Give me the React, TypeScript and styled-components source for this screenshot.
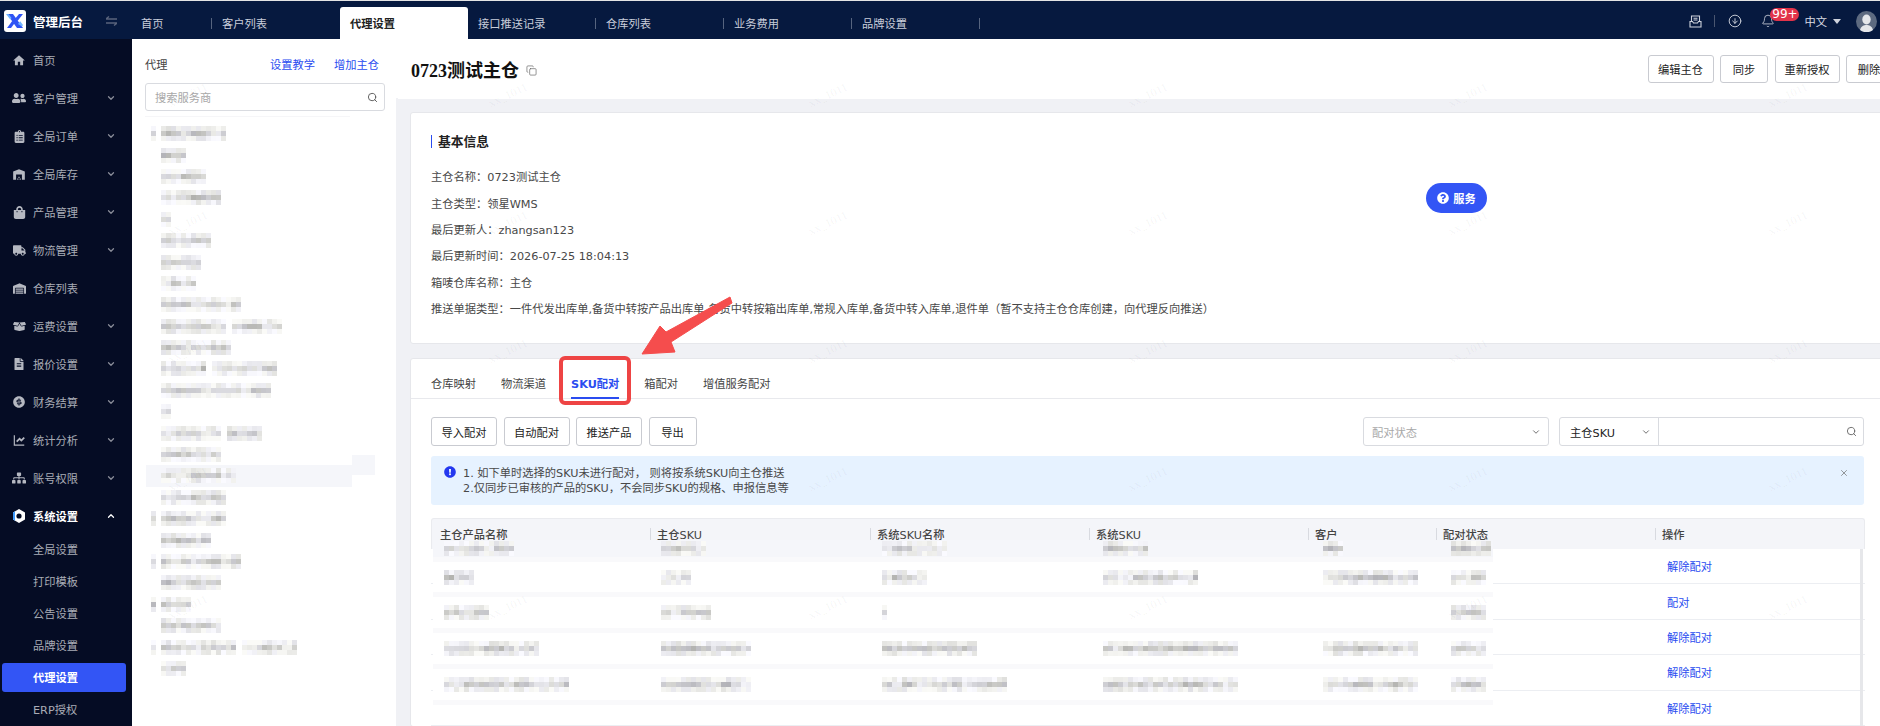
import React from "react";
import styled, { createGlobalStyle } from "styled-components";
import { Bell, ChevronDown, ChevronUp, CircleArrowDown, Copy, Search, X } from "lucide-react";
import {
  FaBoxOpen, FaClipboardList, FaExclamationCircle, FaFileAlt, FaQuestionCircle, FaShoppingBag,
  FaSitemap, FaTruck, FaUserFriends, FaWarehouse,
} from "react-icons/fa";
import { MdHome, MdWarehouse } from "react-icons/md";
import { RiLineChartFill, RiMoneyDollarCircleFill } from "react-icons/ri";

const Global = createGlobalStyle`
  html, body { margin: 0; padding: 0; width: 1880px; height: 726px; overflow: hidden; background: #fff; }
  body { font-family: "DejaVu Sans", "Noto Sans CJK SC", sans-serif; font-size: 11.25px; color: #444; }
  * { box-sizing: border-box; }
`;

const Page = styled.div`
  position: relative; width: 1880px; height: 726px; overflow: hidden;
  border-top: 1px solid #e4e4e4; display: flex; flex-direction: column;
`;
const TopBar = styled.header`
  height: 38px; flex: none; background: #06193f; display: flex; align-items: stretch;
`;
const Brand = styled.div`
  width: 132px; flex: none; display: flex; align-items: center; padding-left: 4px; padding-top: 2px;
`;
const LogoBox = styled.div`
  width: 22px; height: 22px; background: #fff; border-radius: 3px; display: flex; align-items: center; justify-content: center;
`;
const BrandName = styled.span`
  margin-left: 7px; font-size: 12.5px; font-weight: 700; color: #fff; white-space: nowrap;
`;
const SwitchIcon = styled.svg`
  margin-left: 23px; flex: none;
`;
const Tabs = styled.nav`
  display: flex; align-items: flex-end; height: 100%;
`;
const TopTab = styled.div<{ $w: number; $active?: boolean; $pad?: number }>`
  width: ${(p) => p.$w}px; height: ${(p) => (p.$active ? 32 : 38)}px; display: flex; align-items: center;
  justify-content: space-between; padding-left: ${(p) => p.$pad ?? 10}px; padding-top: ${(p) => (p.$active ? 0 : 6)}px;
  color: ${(p) => (p.$active ? "#222" : "#c9cedb")}; font-weight: ${(p) => (p.$active ? 600 : 400)};
  background: ${(p) => (p.$active ? "#fff" : "transparent")}; border-radius: 3px 3px 0 0;
`;
const TopSep = styled.i`
  width: 1px; height: 11px; background: #56647f; display: block;
`;
const TopRight = styled.div`
  margin-left: auto; display: flex; align-items: center; color: #cfd3dd; position: relative; padding-top: 2px;
`;
const TopIconSep = styled.i`
  width: 1px; height: 12px; background: #4a5670; margin: 0 13px 0 12px;
`;
const BellWrap = styled.span`
  position: relative; display: flex; margin-left: 19px;
`;
const Badge = styled.span`
  position: absolute; left: 9px; top: -6px; width: 29px; height: 13px; border-radius: 7px; background: #e2334a;
  color: #fff; font-size: 12px; font-weight: 400; line-height: 13px; text-align: center;
`;
const Lang = styled.span`
  margin-left: 29px; color: #d9dce4; display: flex; align-items: center; gap: 6px;
`;
const Caret = styled.i`
  width: 0; height: 0; border-left: 4px solid transparent; border-right: 4px solid transparent; border-top: 5px solid #cfd3dd;
`;
const Avatar = styled.svg`
  margin-left: 15px; margin-right: 3px; flex: none;
`;

const Body = styled.div`
  flex: 1; display: flex; min-height: 0;
`;
const Sidebar = styled.aside`
  width: 132px; flex: none; background: #050c24; padding-top: 2px; color: #a9acb6;
`;
const MenuItem = styled.div<{ $open?: boolean }>`
  height: 38px; display: flex; align-items: center; padding-left: 12px; padding-right: 16px;
  color: ${(p) => (p.$open ? "#fff" : "#a9acb6")}; font-weight: ${(p) => (p.$open ? 600 : 400)};
`;
const MenuIcon = styled.span<{ $open?: boolean }>`
  width: 14px; height: 14px; display: flex; align-items: center; justify-content: center; color: #b5b8c1; flex: none;
`;
const MenuLabel = styled.span`
  margin-left: 7px; flex: 1; white-space: nowrap;
`;
const SubMenu = styled.div`
  margin-top: -2px;
`;
const SubItem = styled.div<{ $active?: boolean }>`
  height: ${(p) => (p.$active ? 29 : 32)}px; margin: ${(p) => (p.$active ? "1.5px 6px 1.5px 2px" : "0")};
  padding-left: ${(p) => (p.$active ? 31 : 33)}px; display: flex; align-items: center; border-radius: 3px;
  background: ${(p) => (p.$active ? "#3355f5" : "transparent")}; color: ${(p) => (p.$active ? "#fff" : "#a9acb6")};
  font-weight: ${(p) => (p.$active ? 600 : 400)};
`;

const AgentPanel = styled.section`
  width: 266px; flex: none; background: #fff; padding: 17px 13px 0; position: relative;
  &::after { content: ""; position: absolute; right: 0; top: 59px; bottom: 0; width: 2px; background: #f0f1f5; }
`;
const PanelHead = styled.div`
  height: 16px; display: flex; align-items: center; padding-right: 6px;
`;
const PanelTitle = styled.span`
  flex: 1; color: #444;
`;
const LinkText = styled.a`
  color: #2a4cf0; margin-left: 19px;
`;
const SearchBox = styled.div`
  margin-top: 11px; height: 28px; width: 240px; border: 1px solid #d9dbe0; border-radius: 3px; display: flex; align-items: center;
  padding: 0 6px 0 9px; color: #a8a8a8; justify-content: space-between;
`;
const SearchRule = styled.div`
  height: 1px; width: 205px; background: #f6f6f8; margin-top: 5px;
`;
const Tree = styled.div`
  margin-top: 6px; margin-left: 1px;
`;
const TreeRow = styled.div<{ $selected?: boolean }>`
  height: 21.4px; width: 206px; display: flex; align-items: center; position: relative;
  background: ${(p) => (p.$selected ? "#f5f6fa" : "transparent")};
  &::after {
    content: ""; display: ${(p) => (p.$selected ? "block" : "none")}; position: absolute; left: 206px; top: -10px; width: 23px; height: 20px; background: #f5f6fa;
  }
`;
const TreeDot = styled.span`
  width: 15px; flex: none; padding-left: 5px; display: flex;
`;
const Segments = styled.span`
  display: flex; gap: 5px; position: relative; z-index: 1;
`;
const MosaicSvg = styled.svg`
  display: block; filter: blur(0.3px); flex: none;
`;

const Main = styled.main`
  flex: 1; min-width: 0; background: #f0f1f5; overflow: hidden;
`;
const Head = styled.div`
  width: 1494px; height: 60px; background: #fff; display: flex; align-items: center; padding-left: 13px; padding-bottom: 1px;
`;
const Title = styled.h1`
  margin: 0; font: 700 18px "Liberation Serif", "Noto Sans CJK SC", serif; color: #111; display: flex; align-items: center;
`;
const CopyIcon = styled(Copy)`
  margin-left: 7px; margin-top: 3px; color: #666;
`;
const HeadActions = styled.div`
  margin-left: auto; display: flex; gap: 6.5px;
`;
const Btn = styled.button<{ $w: number }>`
  width: ${(p) => p.$w}px; height: 28px; border: 1px solid #c9cbd1; border-radius: 3px; background: #fff; padding: 0;
  font: inherit; color: #222;
`;
const Card = styled.section<{ $mt: number; $h?: number }>`
  width: 1475px; margin: ${(p) => p.$mt}px 0 0 12px; background: #fff; border: 1px solid #e6e7eb; border-radius: 3px;
  ${(p) => (p.$h ? `height: ${p.$h}px;` : "")}
`;
const InfoBody = styled.div`
  padding: 22px 20px 0;
`;
const SectionTitle = styled.h2`
  margin: 0 0 15px; height: 13px; line-height: 13px; border-left: 1px solid #2a4cf0; padding-left: 6px;
  font-size: 12.75px; font-weight: 700; color: #222;
`;
const InfoRow = styled.div`
  height: 26.4px; display: flex; align-items: center; color: #484848; white-space: nowrap;
`;
const CardTabs = styled.div`
  height: 40px; border-bottom: 1px solid #e8e9ed; padding-left: 20px; display: flex; gap: 25px; align-items: stretch;
`;
const CardTab = styled.div<{ $active?: boolean }>`
  display: flex; align-items: center; padding-top: 9px; white-space: nowrap; position: relative;
  color: ${(p) => (p.$active ? "#2a4cf0" : "#444")}; font-weight: ${(p) => (p.$active ? 700 : 400)};
  border-bottom: 2px solid ${(p) => (p.$active ? "#2a4cf0" : "transparent")}; margin-bottom: -1px;
`;
const TabPane = styled.div`
  padding: 18px 20px 0;
`;
const Toolbar = styled.div`
  height: 29px; display: flex; align-items: stretch; gap: 6.5px;
`;
const ToolBtn = styled(Btn)`
  height: 29px;
`;
const ToolRight = styled.div`
  margin-left: auto; display: flex; gap: 10px;
`;
const Select = styled.div<{ $w: number }>`
  width: ${(p) => p.$w}px; border: 1px solid #d9dbe0; border-radius: 3px; display: flex; align-items: center; justify-content: space-between;
  padding: 0 7px 0 8px; color: #a8a8a8;
`;
const InputGroup = styled.div`
  width: 305px; border: 1px solid #d9dbe0; border-radius: 3px; display: flex; align-items: stretch;
`;
const GroupSelect = styled.div`
  width: 99px; border-right: 1px solid #d9dbe0; display: flex; align-items: center; justify-content: space-between; padding: 0 7px 0 10px; color: #222;
`;
const GroupInput = styled.div`
  flex: 1; display: flex; align-items: center; justify-content: flex-end; padding-right: 6px; color: #666;
`;
const Alert = styled.div`
  margin-top: 10px; height: 49px; background: #e6f2ff; border-radius: 3px; display: flex; padding: 10px 10px 0 13px; color: #484848; line-height: 15px;
`;
const AlertIcon = styled(FaExclamationCircle)`
  color: #2438ef; flex: none; margin-top: 0; margin-right: 7px;
`;
const AlertText = styled.div`
  flex: 1; margin-top: 0;
`;
const AlertClose = styled(X)`
  color: #666; margin-top: 2px; margin-right: 5px;
`;
const Table = styled.div`
  margin-top: 13px; width: 1434px; position: relative;
`;
const COLUMNS = "218px 220px 219px 219px 128px 219px 211px";
const THead = styled.div`
  height: 31px; display: grid; grid-template-columns: ${COLUMNS}; background: #f4f5f9; border: 1px solid #eaebef; border-bottom: 0; border-radius: 3px 3px 0 0;
  color: #444; font-weight: 500;
`;
const Th = styled.div<{ $first?: boolean }>`
  display: flex; align-items: center; padding-bottom: 1px; padding-left: ${(p) => (p.$first ? 8 : 0)}px; gap: 6px; white-space: nowrap;
  &::before { content: ""; display: ${(p) => (p.$first ? "none" : "block")}; width: 1px; height: 12px; background: #d8dae0; }
`;
const TRow = styled.div`
  height: 35.4px; display: grid; grid-template-columns: ${COLUMNS}; border-bottom: 1px solid #eceef2; background: #fff;
`;
const ActionCell = styled.a`
  grid-column: 7; color: #2a4cf0; display: flex; align-items: center; padding-left: 13px;
`;
const Scrollbar = styled.div`
  position: absolute; right: 2px; top: 31px; width: 3px; height: 180px; background: #e6e7ea;
`;
const Redaction = styled.div`
  position: absolute; left: 2px; top: 22px; width: 1060px; height: 172px; background: #fff;
`;
const RedactRow = styled.div<{ $h: number; $shade?: boolean }>`
  height: ${(p) => p.$h}px; display: grid; grid-template-columns: 217px 221px 221px 220px 128px 53px; align-items: center;
  background: ${(p) => (p.$shade ? "#f5f6fa" : "#fff")}; border-bottom: 5px solid #f9f9fb; padding-left: 11px;
`;

const WatermarkLayer = styled.div`
  position: absolute; left: 28px; top: 30px; display: grid; grid-template-columns: repeat(6, 320px); grid-auto-rows: 128px; pointer-events: none; z-index: 5;
`;
const Mark = styled.span`
  display: flex; align-items: center; justify-content: center; font: 12px "Liberation Serif", serif;
  color: rgba(40, 40, 60, 0.06); transform: rotate(-25deg);
`;
const ServiceBtn = styled.div`
  position: absolute; left: 1426px; top: 182px; width: 61px; height: 30px; border-radius: 15px; background: #3355f5; color: #fff; z-index: 6;
  display: flex; align-items: center; justify-content: center; gap: 4px; font-weight: 700;
`;
const RedBox = styled.div`
  position: absolute; left: 559px; top: 355px; width: 72px; height: 49px; border: 4px solid #ee4444; border-radius: 6px; z-index: 7;
`;
const ArrowSvg = styled.svg`
  position: absolute; left: 0; top: 0; z-index: 7; pointer-events: none;
`;

function Mosaic({ w, seed = 1, h = 15 }: { w: number; seed?: number; h?: number }) {
  const cells: React.ReactNode[] = [];
  let s = seed * 131 + w * 17 + 7;
  const rnd = () => {
    s = (s * 16807) % 2147483647;
    return (s % 10000) / 10000;
  };
  rnd();
  rnd();
  const cols = Math.max(1, Math.round(w / 5));
  let tone = 0;
  for (let c = 0; c < cols; c++) {
    if (c % 2 === 0) tone = rnd();
    for (let r = 0; r < 3; r++) {
      const jitter = rnd() * 26;
      const base = r === 1 ? 176 + tone * 44 + jitter : 222 + tone * 10 + jitter;
      const v = Math.min(250, Math.round(base));
      const tint = rnd() > 0.5 ? 5 : -3;
      cells.push(
        <rect key={`${c}-${r}`} x={c * 5} y={r * 5} width={5} height={5} fill={`rgb(${v},${v},${Math.min(255, v + tint)})`} />
      );
    }
  }
  return (
    <MosaicSvg width={w} height={h} viewBox={`0 0 ${w} 15`} aria-hidden>
      {cells}
    </MosaicSvg>
  );
}

const treeRows: { segs: number[]; dot?: boolean; selected?: boolean }[] = [
  { segs: [66], dot: true }, { segs: [26] }, { segs: [46] }, { segs: [61] }, { segs: [10] }, { segs: [51] },
  { segs: [41] }, { segs: [36] }, { segs: [81] }, { segs: [66, 51] }, { segs: [71] }, { segs: [46, 65] },
  { segs: [111] }, { segs: [10] }, { segs: [61, 35] }, { segs: [61] }, { segs: [76], selected: true }, { segs: [66] },
  { segs: [66], dot: true }, { segs: [51] }, { segs: [81], dot: true }, { segs: [61] }, { segs: [31], dot: true },
  { segs: [61] }, { segs: [76, 55], dot: true }, { segs: [26] },
];

const menu: { label: string; icon: React.ReactNode; chevron?: boolean }[] = [
  { label: "首页", icon: <MdHome size={17} /> },
  { label: "客户管理", icon: <FaUserFriends size={14} />, chevron: true },
  { label: "全局订单", icon: <FaClipboardList size={13} />, chevron: true },
  { label: "全局库存", icon: <MdWarehouse size={15} />, chevron: true },
  { label: "产品管理", icon: <FaShoppingBag size={13} />, chevron: true },
  { label: "物流管理", icon: <FaTruck size={13} />, chevron: true },
  { label: "仓库列表", icon: <FaWarehouse size={13} /> },
  { label: "运费设置", icon: <FaBoxOpen size={13} />, chevron: true },
  { label: "报价设置", icon: <FaFileAlt size={12} />, chevron: true },
  { label: "财务结算", icon: <RiMoneyDollarCircleFill size={16} />, chevron: true },
  { label: "统计分析", icon: <RiLineChartFill size={15} />, chevron: true },
  { label: "账号权限", icon: <FaSitemap size={14} />, chevron: true },
];

const redacted = [
  { h: 22, shade: true, cells: [70, 45, 66, 45, 22, 41] },
  { h: 35, cells: [30, 30, 46, 96, 95, 35] },
  { h: 36, cells: [45, 50, 5, 0, 0, 35] },
  { h: 36, cells: [95, 90, 95, 136, 95, 35] },
  { h: 36, cells: [125, 90, 125, 136, 95, 35] },
];

export default function App() {
  return (
    <Page>
      <Global />
      <TopBar>
        <Brand>
          <LogoBox>
            <svg width="20" height="20" viewBox="0 0 20 20" aria-hidden>
              <path d="M2 3h6l10 14h-6z" fill="#2f54f5" />
              <path d="M14 3h4l-5.500 7-2-2.700z" fill="#2f54f5" />
              <path d="M2 17h4l3.400-4.500-2-2.800z" fill="#2f54f5" />
              <path d="M1 3h2.500l3 4-1.200 1.600z" fill="#6fb4ff" />
              <path d="M13 13l2.200-2.800L18 14l-1 1.600z" fill="#6fb4ff" />
            </svg>
          </LogoBox>
          <BrandName>管理后台</BrandName>
          <SwitchIcon width="11" height="10" viewBox="0 0 11 10" aria-hidden fill="none" stroke="#59637c" strokeWidth="1.4">
            <path d="M0 3h11M0 3l3-2.500M0 7h11M11 7L8 9.500" />
          </SwitchIcon>
        </Brand>
        <Tabs>
          <TopTab $w={80} $pad={9}><span>首页</span><TopSep /></TopTab>
          <TopTab $w={128}><span>客户列表</span></TopTab>
          <TopTab $w={128} $active><span>代理设置</span></TopTab>
          <TopTab $w={128}><span>接口推送记录</span><TopSep /></TopTab>
          <TopTab $w={128}><span>仓库列表</span><TopSep /></TopTab>
          <TopTab $w={128}><span>业务费用</span><TopSep /></TopTab>
          <TopTab $w={128}><span>品牌设置</span><TopSep /></TopTab>
        </Tabs>
        <TopRight>
          <svg width="13" height="13" viewBox="0 0 13 13" fill="none" stroke="#cfd3dd" strokeWidth="1.1" aria-hidden>
            <path d="M2.500 6V1h8v5M1 6.500h2.500l1 1.500h4l1-1.500H12V12H1zM4.500 3.200h4M4.500 5h4" />
          </svg>
          <TopIconSep />
          <CircleArrowDown size={14} strokeWidth={1.6} />
          <BellWrap>
            <Bell size={14} strokeWidth={1.4} />
            <Badge>99+</Badge>
          </BellWrap>
          <Lang>中文<Caret /></Lang>
          <Avatar width="21" height="21" viewBox="0 0 21 21" aria-hidden>
            <circle cx="10.500" cy="10.500" r="10.500" fill="#5d6a80" />
            <ellipse cx="10.500" cy="8.500" rx="4.200" ry="5" fill="#e4e6ea" />
            <path d="M4 19c1-4 4-5 6.500-5s5.500 1 6.500 5a10.500 10.500 0 0 1-13 0z" fill="#e4e6ea" />
          </Avatar>
        </TopRight>
      </TopBar>
      <Body>
        <Sidebar>
          {menu.map((m) => (
            <MenuItem key={m.label}>
              <MenuIcon>{m.icon}</MenuIcon>
              <MenuLabel>{m.label}</MenuLabel>
              {m.chevron && <ChevronDown size={10} strokeWidth={3} color="#8a8d99" />}
            </MenuItem>
          ))}
          <MenuItem $open>
            <MenuIcon>
              <svg width="14" height="14" viewBox="0 0 14 14" aria-hidden>
                <path d="M7 0l6 3.500v7L7 14l-6-3.500v-7z" fill="#fff" />
                <path d="M1 3.500v7l2 1.200V2.300z" fill="#3d9bff" />
                <circle cx="7" cy="7" r="2.600" fill="#050c24" />
              </svg>
            </MenuIcon>
            <MenuLabel>系统设置</MenuLabel>
            <ChevronUp size={10} strokeWidth={3} color="#fff" />
          </MenuItem>
          <SubMenu>
            <SubItem>全局设置</SubItem>
            <SubItem>打印模板</SubItem>
            <SubItem>公告设置</SubItem>
            <SubItem>品牌设置</SubItem>
            <SubItem $active>代理设置</SubItem>
            <SubItem>ERP授权</SubItem>
          </SubMenu>
        </Sidebar>
        <AgentPanel>
          <PanelHead>
            <PanelTitle>代理</PanelTitle>
            <LinkText>设置教学</LinkText>
            <LinkText>增加主仓</LinkText>
          </PanelHead>
          <SearchBox>
            搜索服务商
            <Search size={11} color="#555" strokeWidth={2} />
          </SearchBox>
          <SearchRule />
          <Tree>
            {treeRows.map((row, i) => (
              <TreeRow key={i} $selected={row.selected}>
                <TreeDot>{row.dot && <Mosaic w={5} seed={i + 50} h={15} />}</TreeDot>
                <Segments>
                  {row.segs.map((w, j) => (
                    <Mosaic key={j} w={w} seed={i * 3 + j + 1} />
                  ))}
                </Segments>
              </TreeRow>
            ))}
          </Tree>
        </AgentPanel>
        <Main>
          <Head>
            <Title>
              0723测试主仓
              <CopyIcon size={11} strokeWidth={1.5} />
            </Title>
            <HeadActions>
              <Btn $w={66}>编辑主仓</Btn>
              <Btn $w={48}>同步</Btn>
              <Btn $w={65}>重新授权</Btn>
              <Btn $w={46}>删除</Btn>
            </HeadActions>
          </Head>
          <Card $mt={13} $h={232}>
            <InfoBody>
              <SectionTitle>基本信息</SectionTitle>
              <InfoRow>主仓名称：0723测试主仓</InfoRow>
              <InfoRow>主仓类型：领星WMS</InfoRow>
              <InfoRow>最后更新人：zhangsan123</InfoRow>
              <InfoRow>最后更新时间：2026-07-25 18:04:13</InfoRow>
              <InfoRow>箱唛仓库名称：主仓</InfoRow>
              <InfoRow>推送单据类型：一件代发出库单,备货中转按产品出库单,备货中转按箱出库单,常规入库单,备货中转入库单,退件单（暂不支持主仓仓库创建，向代理反向推送）</InfoRow>
            </InfoBody>
          </Card>
          <Card $mt={14}>
            <CardTabs>
              <CardTab>仓库映射</CardTab>
              <CardTab>物流渠道</CardTab>
              <CardTab $active>SKU配对</CardTab>
              <CardTab>箱配对</CardTab>
              <CardTab>增值服务配对</CardTab>
            </CardTabs>
            <TabPane>
              <Toolbar>
                <ToolBtn $w={66}>导入配对</ToolBtn>
                <ToolBtn $w={66}>自动配对</ToolBtn>
                <ToolBtn $w={66}>推送产品</ToolBtn>
                <ToolBtn $w={48}>导出</ToolBtn>
                <ToolRight>
                  <Select $w={186}>配对状态<ChevronDown size={10} strokeWidth={2} color="#555" /></Select>
                  <InputGroup>
                    <GroupSelect>主仓SKU<ChevronDown size={10} strokeWidth={2} color="#555" /></GroupSelect>
                    <GroupInput><Search size={11} strokeWidth={2} /></GroupInput>
                  </InputGroup>
                </ToolRight>
              </Toolbar>
              <Alert>
                <AlertIcon size={12} />
                <AlertText>
                  <div>1. 如下单时选择的SKU未进行配对， 则将按系统SKU向主仓推送</div>
                  <div>2.仅同步已审核的产品的SKU，不会同步SKU的规格、申报信息等</div>
                </AlertText>
                <AlertClose size={10} strokeWidth={1.6} />
              </Alert>
              <Table>
                <THead>
                  <Th $first>主仓产品名称</Th>
                  <Th>主仓SKU</Th>
                  <Th>系统SKU名称</Th>
                  <Th>系统SKU</Th>
                  <Th>客户</Th>
                  <Th>配对状态</Th>
                  <Th>操作</Th>
                </THead>
                {["解除配对", "配对", "解除配对", "解除配对", "解除配对"].map((a, i) => (
                  <TRow key={i}><ActionCell>{a}</ActionCell></TRow>
                ))}
                <Scrollbar />
                <Redaction>
                  {redacted.map((row, i) => (
                    <RedactRow key={i} $h={row.h} $shade={row.shade}>
                      {row.cells.map((w, j) => (
                        <span key={j}>{w > 0 && <Mosaic w={w} seed={i * 7 + j + 3} />}</span>
                      ))}
                    </RedactRow>
                  ))}
                </Redaction>
              </Table>
            </TabPane>
          </Card>
        </Main>
      </Body>
      <WatermarkLayer aria-hidden>
        {Array.from({ length: 30 }).map((_, i) => (
          <Mark key={i}>xx_1011</Mark>
        ))}
      </WatermarkLayer>
      <ServiceBtn><FaQuestionCircle size={12} />服务</ServiceBtn>
      <RedBox />
      <ArrowSvg width="1880" height="726" viewBox="0 0 1880 726" aria-hidden>
        <polygon points="642,353 660,325 666,331 730,296 732,302 671,341 675,351" fill="#f54d4d" stroke="#f54d4d" strokeWidth="1" strokeLinejoin="round" />
      </ArrowSvg>
    </Page>
  );
}
